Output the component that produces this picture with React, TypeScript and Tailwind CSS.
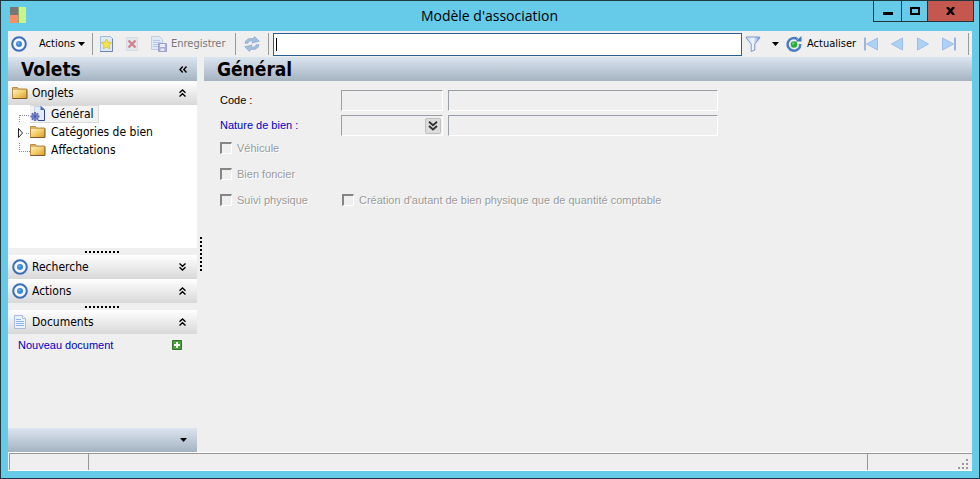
import type { ReactNode } from "react";

const UI_FONT = "font-['DejaVu_Sans_Condensed','DejaVu_Sans',sans-serif]";
const FORM_FONT = "font-['Liberation_Sans',sans-serif]";
const BAR = "bg-linear-to-b from-[#dbe5f0] to-[#a5b3c1]";

function TargetIcon() {
  return (
    <svg aria-hidden="true" className="h-4 w-4 shrink-0" viewBox="0 0 16 16">
      <circle cx="8" cy="8" r="6.8" fill="#f4f8fd" stroke="#3c6eb8" strokeWidth="2" />
      <circle cx="8" cy="8" r="3" fill="#3f86d6" />
      <circle cx="7.4" cy="7.3" r="1.1" fill="#79b3ec" />
    </svg>
  );
}

function FolderIcon() {
  return (
    <svg aria-hidden="true" className="h-4 w-4 shrink-0" viewBox="0 0 16 16">
      <defs>
        <linearGradient id="folder" x1="0" y1="0" x2="1" y2="1">
          <stop offset="0" stopColor="#fdf0bd" />
          <stop offset="0.5" stopColor="#f2cb66" />
          <stop offset="1" stopColor="#d99a2b" />
        </linearGradient>
      </defs>
      <path d="M.5 13.5V2.5h5l1 1.500h8v9.500z" fill="#dcb469" stroke="#b98d45" />
      <path d="M1 5h13.500v8.500H1z" fill="url(#folder)" />
      <path d="M.5 13.500h14.500V4.500" fill="none" stroke="#7d5a2c" />
    </svg>
  );
}

function PageGearIcon() {
  return (
    <svg aria-hidden="true" className="h-4 w-4 shrink-0" viewBox="0 0 16 16">
      <path d="M4.500 .5h7l3 3v11h-10z" fill="#e3ecfa" stroke="#c3cfe2" />
      <path d="M11 .5l3.500 3.500v10.500H8" fill="none" stroke="#32487c" />
      <path d="M10.500 .5v3.500h4z" fill="#4a66a8" />
      <g stroke="#5561b0" strokeWidth="1.800">
        <path d="M5 6v9M.5 10.500h9M1.800 7.300l6.400 6.400M8.200 7.300l-6.400 6.400" />
      </g>
      <circle cx="5" cy="10.500" r="3.200" fill="#6e7cc8" />
      <circle cx="5" cy="10.500" r="1.100" fill="#434f9c" />
    </svg>
  );
}

function DocumentIcon() {
  return (
    <svg aria-hidden="true" className="h-4 w-4 shrink-0" viewBox="0 0 16 16">
      <path d="M2.500 1.500h8l3 3v10h-11z" fill="#edf3fc" stroke="#a9bcde" />
      <path d="M10.500 1.500v3h3" fill="#fff" stroke="#a9bcde" />
      <path d="M4 5.500h5M4 7.500h8M4 9.500h8M4 11.500h8" stroke="#8fb3ea" />
    </svg>
  );
}

function NewIcon() {
  return (
    <svg aria-hidden="true" className="h-4 w-4" viewBox="0 0 16 16">
      <path d="M1.500 .5h10l2 2v13h-12z" fill="#dbe8f8" stroke="#a6bcd8" />
      <path d="M1 15.500h12.500V2.500" fill="none" stroke="#6e87a8" />
      <path
        d="M7.500 3l1.500 3.200 3.600.4-2.600 2.500.7 3.700-3.200-1.800-3.200 1.800.7-3.700L2.400 6.600 6 6.200z"
        fill="#f7e545"
        stroke="#d0bc3c"
        strokeWidth=".8"
      />
    </svg>
  );
}

function DeleteIcon() {
  return (
    <svg aria-hidden="true" className="h-4 w-4 opacity-70" viewBox="0 0 16 16">
      <path d="M2.500 1.500h11v13h-11z" fill="#dfe4ee" stroke="#ccd2df" />
      <path d="M4.500 4.500l7 7M11.500 4.500l-7 7" stroke="#c4565d" strokeWidth="2.400" />
    </svg>
  );
}

function SaveIcon() {
  return (
    <svg aria-hidden="true" className="h-4 w-4 opacity-70" viewBox="0 0 16 16">
      <path d="M.5.5h8l3 3v10H.5z" fill="#d9e6f8" stroke="#b0c0da" />
      <path d="M2 4.500h7M2 6.500h8M2 8.500h5M2 10.500h5" stroke="#9fbbe4" />
      <path d="M7.500 7.500h8v8h-8z" fill="#8f94cf" stroke="#7b80bd" />
      <path d="M9 8h5v3H9zM9.500 12.500h4v2.500h-4z" fill="#e4e6f7" />
    </svg>
  );
}

function SyncIcon() {
  return (
    <svg aria-hidden="true" className="h-4 w-4" viewBox="0 0 16 16">
      <g fill="#a3bfe0" stroke="#7f9fc8" strokeWidth=".6">
        <path d="M1 7.300C1.500 3.500 5 1.800 9 2.800L10.500.5 15.300 5.200 8 7l1-2C6.500 4.300 4.500 5.300 3.800 7.300z" />
        <path d="M15 8.700c-.5 3.800-4 5.500-8 4.500l-1.500 2.300L.7 10.800 8 9l-1 2c2.500.7 4.500-.3 5.200-2.300z" />
      </g>
    </svg>
  );
}

function FilterIcon() {
  return (
    <svg aria-hidden="true" className="h-4 w-4" viewBox="0 0 16 16">
      <defs>
        <linearGradient id="funnel">
          <stop offset="0" stopColor="#b4cff4" />
          <stop offset=".5" stopColor="#f3f8ff" />
          <stop offset="1" stopColor="#7398d8" />
        </linearGradient>
      </defs>
      <path d="M1.300 1h13.400v1.200L9.800 8v6l-3.600 1.500V8L1.300 2.200z" fill="url(#funnel)" stroke="#7d98c6" />
    </svg>
  );
}

function RefreshIcon() {
  return (
    <svg aria-hidden="true" className="h-4 w-4 shrink-0" viewBox="0 0 16 16">
      <path d="M11.500 3.200A6.300 6.300 0 1 0 14.200 8" fill="none" stroke="#4a7cc3" strokeWidth="2.500" />
      <path d="M9.500 5.500h6V0z" fill="#3f74be" />
      <circle cx="8" cy="8.500" r="3.300" fill="#2dab37" />
      <circle cx="7.200" cy="7.500" r="1.200" fill="#6cd66f" />
    </svg>
  );
}

function NavIcon({ back, bar }: { back?: boolean; bar?: boolean }) {
  return (
    <svg aria-hidden="true" className="h-4 w-4" viewBox="0 0 16 16">
      <g transform={back ? "translate(16 0) scale(-1 1)" : undefined}>
        <path
          d={bar ? "M1.500 2l11 6-11 6z" : "M2.500 2l11 6-11 6z"}
          fill="#acd2f6"
          stroke="#9dbde6"
        />
        {bar && <path d="M14 1.500v13" stroke="#9fb4da" strokeWidth="2" />}
      </g>
    </svg>
  );
}

function Caret() {
  return (
    <svg aria-hidden="true" className="h-1 w-[7px]" viewBox="0 0 7 4">
      <path d="M0 0h7L3.500 4z" />
    </svg>
  );
}

function Chevrons({ down }: { down?: boolean }) {
  return (
    <svg aria-hidden="true" className="h-2 w-[7px]" viewBox="0 0 7 8" fill="none" stroke="#000" strokeWidth="1.400">
      <path d={down ? "M.5.5l3 2.700 3-2.700M.5 4.300l3 2.700 3-2.700" : "M.5 3.700l3-2.700 3 2.700M.5 7.500l3-2.700 3 2.700"} />
    </svg>
  );
}

function Separator() {
  return <span className="h-[22px] w-px shrink-0 bg-[#9a9a9a]" />;
}

function ToolButton({ label, className = "w-4", children }: { label: string; className?: string; children: ReactNode }) {
  return (
    <button type="button" aria-label={label} className={`flex h-5 shrink-0 items-center justify-center ${className}`}>
      {children}
    </button>
  );
}

function Toolbar() {
  return (
    <div className="flex h-[26px] shrink-0 items-center px-[3px] text-[11px]">
      <TargetIcon />
      <button type="button" className="ml-3 flex w-[46px] shrink-0 items-center justify-between">
        Actions
        <Caret />
      </button>
      <span className="w-[7px] shrink-0" />
      <Separator />
      <div className="flex shrink-0 items-center gap-[9px] px-1.5">
        <ToolButton label="Nouveau"><NewIcon /></ToolButton>
        <ToolButton label="Supprimer"><DeleteIcon /></ToolButton>
        <button type="button" className="ml-0.5 flex w-[75px] items-center gap-1 text-[#777]">
          <SaveIcon />
          Enregistrer
        </button>
      </div>
      <span className="w-[3px] shrink-0" />
      <Separator />
      <ToolButton label="Synchroniser" className="w-8"><SyncIcon /></ToolButton>
      <Separator />
      <div className="relative ml-1 flex min-w-0 flex-1">
        <input
          type="text"
          aria-label="Recherche rapide"
          className="h-[23px] min-w-0 flex-1 border border-[#2b5f94] bg-white px-[3px] outline-none"
        />
        <span className="absolute left-[3px] top-[5px] h-[13px] w-px bg-black" />
      </div>
      <ToolButton label="Filtrer" className="w-[22px]"><FilterIcon /></ToolButton>
      <ToolButton label="Options du filtre" className="w-[22px]"><Caret /></ToolButton>
      <button type="button" className="flex w-[77px] shrink-0 items-center gap-[5px]">
        <RefreshIcon />
        Actualiser
      </button>
      <div className="flex shrink-0 items-center gap-[10px] pr-[11px]">
        <ToolButton label="Premier"><NavIcon back bar /></ToolButton>
        <ToolButton label="Précédent"><NavIcon back /></ToolButton>
        <ToolButton label="Suivant"><NavIcon /></ToolButton>
        <ToolButton label="Dernier"><NavIcon bar /></ToolButton>
      </div>
      <Separator />
    </div>
  );
}

function PanelHeader({ icon, title, down }: { icon: ReactNode; title: string; down?: boolean }) {
  return (
    <button
      type="button"
      className="flex h-6 w-full shrink-0 items-center gap-1 bg-linear-to-b from-white to-[#d8d8d8] pl-1 pr-[11px] text-left"
    >
      {icon}
      <span className="flex-1">{title}</span>
      <Chevrons down={down} />
    </button>
  );
}

function Grip() {
  return (
    <div className="flex h-[7px] shrink-0 items-center justify-center">
      <span className="h-0.5 w-[35px] bg-[repeating-linear-gradient(to_right,#000_0_2px,transparent_2px_4px)]" />
    </div>
  );
}

function TreeRow({ lines, icon, label, selected }: { lines: ReactNode; icon: ReactNode; label: string; selected?: boolean }) {
  return (
    <li className="flex h-[18px] items-center">
      <svg aria-hidden="true" className="h-[18px] w-[22px]" viewBox="0 0 22 18" fill="none" stroke="#888" strokeDasharray="1 1">
        {lines}
      </svg>
      <a
        href="#"
        className={`flex h-full items-center gap-[5px] pr-1 ${selected ? "border border-l-0 border-[#d9d9d9] bg-[#f2f2f2]" : ""}`}
      >
        {icon}
        {label}
      </a>
    </li>
  );
}

function Sidebar() {
  return (
    <aside className="flex w-[189px] shrink-0 flex-col text-[12px]">
      <header className={`flex h-6 shrink-0 items-center justify-between pl-[13px] pr-[10px] ${BAR}`}>
        <h2 className="text-[19px] font-bold leading-6">Volets</h2>
        <button type="button" aria-label="Réduire">
          <svg aria-hidden="true" className="h-[7px] w-2" viewBox="0 0 8 7" fill="none" stroke="#000" strokeWidth="1.400">
            <path d="M3.700.5L1 3.500l2.700 3M7.500.5l-2.700 3 2.700 3" />
          </svg>
        </button>
      </header>
      <PanelHeader icon={<FolderIcon />} title="Onglets" />
      <ul className="min-h-[143px] flex-1 bg-white">
        <TreeRow
          selected
          label="Général"
          icon={<PageGearIcon />}
          lines={<path d="M11.500 10v8M12 10.500h10" />}
        />
        <TreeRow
          label="Catégories de bien"
          icon={<FolderIcon />}
          lines={
            <>
              <path d="M10.500 5.500v9l4-4.500z" fill="#fff" stroke="#222" strokeDasharray="none" />
              <path d="M18 10.500h4" />
            </>
          }
        />
        <TreeRow
          label="Affectations"
          icon={<FolderIcon />}
          lines={<path d="M11.500 2v8M11 10.500h11" />}
        />
      </ul>
      <Grip />
      <PanelHeader icon={<TargetIcon />} title="Recherche" down />
      <PanelHeader icon={<TargetIcon />} title="Actions" />
      <Grip />
      <PanelHeader icon={<DocumentIcon />} title="Documents" />
      <div className={`flex h-[94px] shrink-0 items-start justify-between pl-2.5 pr-[15px] pt-1 text-[11px] text-[#0000c0] ${FORM_FONT}`}>
        <a href="#" className="leading-[14px]">Nouveau document</a>
        <button type="button" aria-label="Ajouter un document" className="pt-0.5">
          <svg aria-hidden="true" className="h-[10px] w-[10px]" viewBox="0 0 10 10">
            <path d="M.5.5h9v9h-9z" fill="#48a33b" stroke="#2f7328" />
            <path d="M5 2v6M2 5h6" stroke="#fff" strokeWidth="2" />
          </svg>
        </button>
      </div>
      <footer className={`flex h-6 shrink-0 items-center justify-end pr-[10px] ${BAR}`}>
        <button type="button" aria-label="Plus de volets" className="flex">
          <Caret />
        </button>
      </footer>
    </aside>
  );
}

const FIELD = "h-[21px] border border-b-white border-l-[#9a9fa5] border-r-white border-t-[#9a9fa5] bg-[#efefef] px-1 outline-none";

function Check({ label }: { label: string }) {
  return (
    <label className="flex h-4 items-center gap-[5px] text-[#9a9a9a] [text-shadow:1px_1px_0_#fff]">
      <input
        type="checkbox"
        disabled
        className="h-3 w-3 shrink-0 appearance-none border-b border-l-2 border-r border-t-2 border-b-white border-l-[#858585] border-r-white border-t-[#858585]"
      />
      {label}
    </label>
  );
}

function GeneralForm() {
  return (
    <form className={`px-4 pt-[9px] text-[11px] ${FORM_FONT}`}>
      <div className="grid grid-cols-[121px_102px_275px] gap-y-1">
        <label htmlFor="code" className="self-center">Code :</label>
        <input id="code" disabled className={FIELD} />
        <input aria-label="Libellé du code" disabled className={`ml-[5px] ${FIELD}`} />
        <label htmlFor="nature" className="self-center text-[#0000c0]">Nature de bien :</label>
        <div className={`flex items-center justify-end ${FIELD}`}>
          <input id="nature" className="w-0 min-w-0 flex-1 bg-transparent outline-none" disabled />
          <button
            type="button"
            aria-label="Choisir une nature"
            className="-mr-[3px] flex h-4 w-4 items-center justify-center rounded-[2px] border border-[#c0c0c0] bg-[#dcdcdc]"
          >
            <svg aria-hidden="true" className="h-[10px] w-[10px] shrink-0" viewBox="0 0 10 10" fill="none" stroke="#333" strokeWidth="1.900">
              <path d="M1 .8l4 3.400 4-3.400M1 5l4 3.400L9 5" />
            </svg>
          </button>
        </div>
        <input aria-label="Libellé de la nature" disabled className={`ml-[5px] ${FIELD}`} />
      </div>
      <div className="flex flex-col gap-[10px] pt-1">
        <Check label="Véhicule" />
        <Check label="Bien foncier" />
        <div className="grid grid-cols-[122px_1fr]">
          <Check label="Suivi physique" />
          <Check label="Création d'autant de bien physique que de quantité comptable" />
        </div>
      </div>
    </form>
  );
}

function TitleBar() {
  return (
    <header className="-mr-0.5 flex h-[30px] shrink-0 items-start">
      <svg aria-hidden="true" className="ml-0.5 mt-1.5 h-4 w-4" viewBox="0 0 16 16">
        <path d="M0 0h8v8H0z" fill="#777" />
        <path d="M0 8h8v8H0z" fill="#f58f62" />
        <path d="M9 0h7v16H9z" fill="#c6f58a" />
        <path d="M8 0h1v16H8z" fill="#8da26f" />
      </svg>
      <h1 className="flex-1 pl-20 pt-[3px] text-center font-['Open_Sans',sans-serif] text-[14px] leading-6">
        Modèle d&apos;association
      </h1>
      <div className="flex h-[21px] divide-x divide-[#25343b] border border-t-0 border-[#25343b]">
        <button type="button" aria-label="Réduire la fenêtre" className="flex w-7 items-center justify-center">
          <span className="mt-1 h-[3px] w-[10px] bg-black" />
        </button>
        <button type="button" aria-label="Agrandir" className="flex w-[26px] items-center justify-center">
          <span className="h-2 w-[10px] border-2 border-black" />
        </button>
        <button type="button" aria-label="Fermer" className="flex w-[45px] items-center justify-center bg-[#c4584f]">
          <svg aria-hidden="true" className="h-2 w-[9px]" viewBox="0 0 9 8">
            <path d="M1 0l7 8M8 0L1 8" stroke="#000" strokeWidth="2.500" />
          </svg>
        </button>
      </div>
    </header>
  );
}

function StatusBar() {
  return (
    <footer className="flex h-[19px] shrink-0 border-b border-t border-white pl-px">
      <div className="w-[79px] border-l border-t border-[#979797]" />
      <div className="flex-1 border-l border-t border-[#979797]" />
      <div className="flex w-[105px] items-end justify-end border-l border-t border-[#979797] pb-px pr-1">
        <svg aria-hidden="true" className="h-[10px] w-[10px]" viewBox="0 0 10 10" fill="#999">
          <path d="M8 0h2v2H8zM4 4h2v2H4zM8 4h2v2H8zM0 8h2v2H0zM4 8h2v2H4zM8 8h2v2H8z" />
        </svg>
      </div>
    </footer>
  );
}

export default function App() {
  return (
    <div className={`flex min-h-screen flex-col border border-[#203840] bg-[#66cae9] px-[7px] pb-[7px] text-black ${UI_FONT}`}>
      <TitleBar />
      <div className="flex flex-1 flex-col bg-[#efefef]">
        <Toolbar />
        <div className="flex flex-1">
          <Sidebar />
          <div className="flex w-[7px] shrink-0 flex-col items-center justify-center">
            <span className="h-[35px] w-0.5 bg-[repeating-linear-gradient(to_bottom,#000_0_2px,transparent_2px_4px)]" />
          </div>
          <main className="min-w-0 flex-1">
            <h2 className={`h-6 pl-[13px] text-[19px] font-bold leading-6 ${BAR}`}>Général</h2>
            <GeneralForm />
          </main>
        </div>
        <StatusBar />
      </div>
    </div>
  );
}
